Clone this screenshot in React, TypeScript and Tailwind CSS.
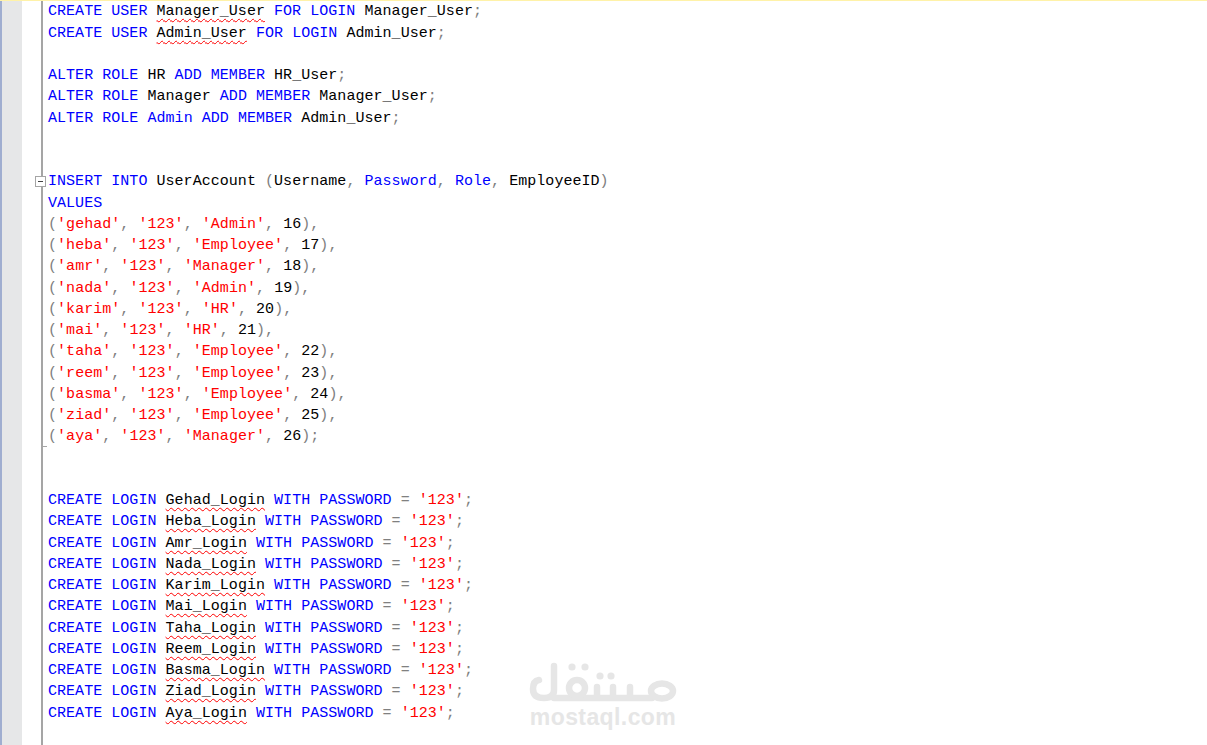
const kw = "text-[#0000ff]";
const str = "text-[#ff0000]";
const op = "text-[#808080]";

function Squiggle({ children }: { children: string }) {
  return <span className="underline decoration-wavy decoration-[#ff0000] decoration-1 underline-offset-[3px] [text-decoration-skip-ink:none]">{children}</span>;
}

function createUser(name: string, login: string) {
  return (
    <>
      <span className={kw}>CREATE USER </span>
      <Squiggle>{name}</Squiggle>
      <span className={kw}> FOR LOGIN </span>
      {login}
      <span className={op}>;</span>
    </>
  );
}

function alterRole(role: string, roleClass: string, user: string) {
  return (
    <>
      <span className={kw}>ALTER ROLE </span>
      <span className={roleClass}>{role}</span>
      <span className={kw}> ADD MEMBER </span>
      {user}
      <span className={op}>;</span>
    </>
  );
}

function valueRow(name: string, role: string, id: number, last: boolean) {
  return (
    <>
      <span className={op}>(</span>
      <span className={str}>'{name}'</span>
      <span className={op}>, </span>
      <span className={str}>'123'</span>
      <span className={op}>, </span>
      <span className={str}>'{role}'</span>
      <span className={op}>, </span>
      {id}
      <span className={op}>){last ? ";" : ","}</span>
    </>
  );
}

function createLogin(name: string) {
  return (
    <>
      <span className={kw}>CREATE LOGIN </span>
      <Squiggle>{name}</Squiggle>
      <span className={kw}> WITH PASSWORD </span>
      <span className={op}>= </span>
      <span className={str}>'123'</span>
      <span className={op}>;</span>
    </>
  );
}

const rows: [string, string, number][] = [
  ["gehad", "Admin", 16],
  ["heba", "Employee", 17],
  ["amr", "Manager", 18],
  ["nada", "Admin", 19],
  ["karim", "HR", 20],
  ["mai", "HR", 21],
  ["taha", "Employee", 22],
  ["reem", "Employee", 23],
  ["basma", "Employee", 24],
  ["ziad", "Employee", 25],
  ["aya", "Manager", 26],
];

const logins = ["Gehad", "Heba", "Amr", "Nada", "Karim", "Mai", "Taha", "Reem", "Basma", "Ziad", "Aya"];

function Line({ children }: { children?: React.ReactNode }) {
  return <div className="h-[21.25px] whitespace-pre">{children}</div>;
}

function Watermark() {
  return (
    <div className="absolute left-[528px] top-[660px] w-[150px] flex flex-col items-center text-[#e6e6e6] pointer-events-none">
      <svg width="150" height="44" viewBox="0 0 150 44" fill="none" stroke="#e6e6e6" strokeWidth="6.5" strokeLinecap="round" strokeLinejoin="round">
        {/* lam bowl */}
        <path d="M26 6V30Q26 38 16 38Q5 38 5 29Q5 21 11 20" />
        {/* baseline */}
        <path d="M26 38H124" />
        {/* qaf loop and dots */}
        <circle cx="49" cy="28" r="8" />
        <circle cx="44" cy="7" r="3.6" fill="#e6e6e6" stroke="none" />
        <circle cx="57" cy="7" r="3.6" fill="#e6e6e6" stroke="none" />
        {/* teeth */}
        <path d="M69 37V27M85 37V27M102 37V27" />
        <circle cx="72" cy="16" r="3.6" fill="#e6e6e6" stroke="none" />
        <circle cx="83" cy="16" r="3.6" fill="#e6e6e6" stroke="none" />
        {/* mim */}
        <ellipse cx="134" cy="31" rx="11" ry="7.5" />
      </svg>
      <div className="font-['Liberation_Sans',sans-serif] font-bold text-[23px] leading-[26px] tracking-[0.4px]">mostaql.com</div>
    </div>
  );
}

export default function App() {
  return (
    <div className="relative h-[745px] w-[1207px] overflow-hidden bg-white flex flex-col">
      <div className="h-px bg-[#fff2a8] shrink-0" />
      <div className="flex flex-1 min-h-0">
        <div className="w-[22px] shrink-0 bg-[#e6e7e8] border-l-2 border-[#a0aed0]" />
        <div className="w-[19px] shrink-0 bg-white" />
        <div className="w-[2px] shrink-0 bg-[#a5a5a5]" />
        <div className="pl-[5px] pt-[0.3px] font-['Liberation_Mono',monospace] text-[15px] tracking-[0.04px] text-black leading-[21.25px]">
          <Line>{createUser("Manager_User", "Manager_User")}</Line>
          <Line>{createUser("Admin_User", "Admin_User")}</Line>
          <Line />
          <Line>{alterRole("HR", "text-black", "HR_User")}</Line>
          <Line>{alterRole("Manager", "text-black", "Manager_User")}</Line>
          <Line>{alterRole("Admin", kw, "Admin_User")}</Line>
          <Line />
          <Line />
          <Line>
            <span className={kw}>INSERT INTO </span>UserAccount <span className={op}>(</span>Username<span className={op}>, </span>
            <span className={kw}>Password</span><span className={op}>, </span><span className={kw}>Role</span><span className={op}>, </span>EmployeeID<span className={op}>)</span>
          </Line>
          <Line><span className={kw}>VALUES</span></Line>
          {rows.map((r, i) => (
            <Line key={r[0]}>{valueRow(r[0], r[1], r[2], i === rows.length - 1)}</Line>
          ))}
          <Line />
          <Line />
          {logins.map((n) => (
            <Line key={n}>{createLogin(n + "_Login")}</Line>
          ))}
        </div>
      </div>
      {/* collapse box + end tick sit on top of the outline line */}
      <div className="absolute left-[35px] top-[176px] w-[11px] h-[11px] bg-white border border-[#a5a5a5] flex items-center justify-center">
        <div className="w-[5px] h-px bg-[#444444]" />
      </div>
      <div className="absolute left-[42px] top-[446px] w-[5px] h-px bg-[#a5a5a5]" />
      <Watermark />
    </div>
  );
}
